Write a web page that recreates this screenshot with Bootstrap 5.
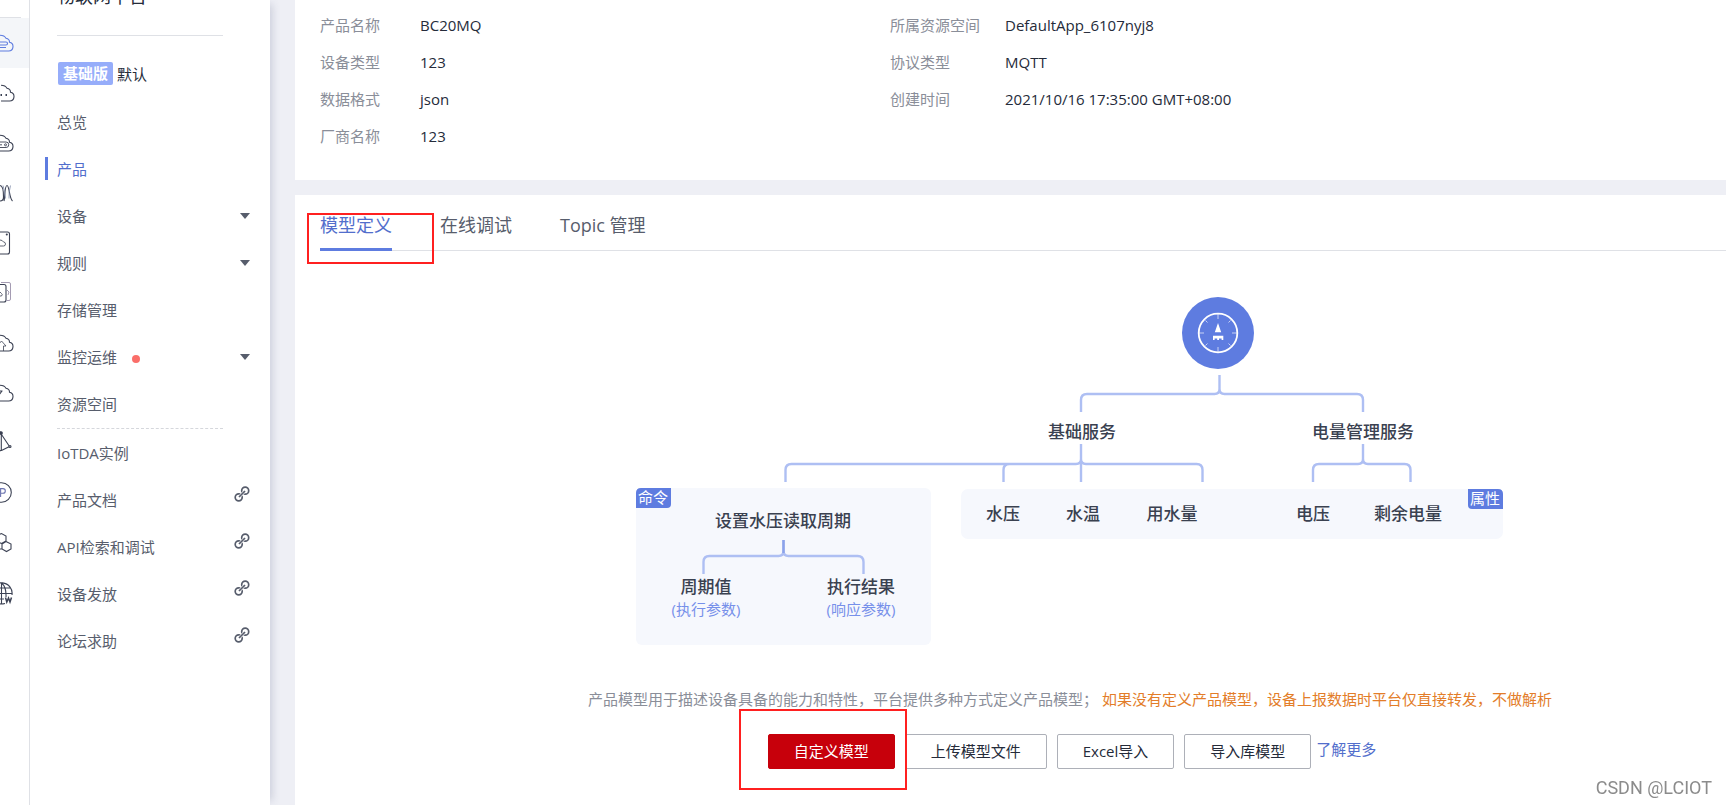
<!DOCTYPE html>
<html lang="zh-CN">
<head>
<meta charset="utf-8">
<meta name="viewport" content="width=device-width, initial-scale=1">
<title>物联网平台</title>
<link rel="stylesheet" href="https://cdn.jsdelivr.net/npm/bootstrap@5.3.0/dist/css/bootstrap.min.css">
<style>
  body { font-family: "Open Sans", "Noto Sans CJK SC", sans-serif; font-size: 15px; line-height: 24px; color: #252b3a; background: #eeeff5; }
  a { text-decoration: none; }
  .app { min-height: 100vh; overflow: hidden; }

  .rail { width: 30px; border-right: 1px solid #dfe1e6; }
  .rail-top { height: 18px; }
  .rail-top span { width: 21px; height: 1px; background: #dfe1e6; }
  .rail-item { height: 50px; color: #3c4254; }
  .rail-item.current { background: #f4f6f9; color: #5e7ce0; }
  .rail-item svg { display: block; width: 29px; height: 50px; fill: none; stroke: currentColor; stroke-width: 1.1; }

  .side { width: 240px; padding-left: 27px; box-shadow: 6px 0 8px -4px rgba(60, 70, 110, .2); z-index: 1; }
  .side-title { font-size: 18px; margin: -15px 0 0; width: 166px; height: 51px; border-bottom: 1px solid #dfe1e6; }
  .edition { margin-top: 26px; margin-bottom: 13px; height: 23px; padding-left: 1px; }
  .edition-tag { background: #96adfa; color: #fff; border-radius: 2px; padding: 0 5px; font-weight: 700; line-height: 23px; }
  .menu-link { height: 47px; padding-right: 20px; color: #575d6c; }
  .menu-link.current { color: #526ecc; border-left: 3px solid #5e7ce0; border-image: linear-gradient(transparent 12px, #5e7ce0 12px, #5e7ce0 35px, transparent 35px) 0 0 0 3; margin-left: -12px; padding-left: 9px; }
  .menu-split { width: 166px; border-top: 1px dashed #d5d7dc; margin-top: 1px; }
  .alert-dot { width: 8px; height: 8px; background: #fa6e69; margin-left: 15px; margin-top: 4px; }
  .caret { border: 5px solid transparent; border-top: 6px solid #575d6c; border-bottom: 0; }
  .ext { width: 16px; height: 16px; margin-bottom: 12px; }

  .main { padding-left: 25px; overflow: hidden; min-width: 0; }
  .panel { background: #fff; margin-right: -118px; padding: 0 24px 0 25px; }
  .panel.info { padding-top: 7px; padding-bottom: 25px; margin-bottom: 15px; }
  .info-col { flex: 0 0 38%; }
  .info-col dl { line-height: 37px; grid-template-columns: 100px 1fr; }
  .info-col.wide dl { grid-template-columns: 115px 1fr; }
  .info-col dt { font-weight: 400; color: #8a8e99; }
  .tabs { height: 56px; gap: 48px; border-bottom: 1px solid #dfe1e6; padding-top: 5px; }
  .tabs .nav-link { font-size: 18px; padding: 0; line-height: 50px; height: 51px; color: #575d6c; border-bottom: 3px solid transparent; }
  .tabs .nav-link.active { color: #526ecc; border-color: #5e7ce0; }
  .marker { position: absolute; border: 2px solid #ff2020; pointer-events: none; z-index: 2; }
  .marker-tab { inset: 13px -42px -14px -13px; }
  .marker-btn { inset: -25px -12px -21px -29px; }

  .stage { padding-top: 39px; }
  .tree { width: 868px; height: 356px; }
  .tree .name { font-size: 17px; fill: #3a4150; text-anchor: middle; font-weight: 500; }
  .tree .param { font-size: 15px; fill: #7690ea; text-anchor: middle; }
  .tree .tag-text { font-size: 15px; fill: #fff; text-anchor: middle; }
  .hint { margin: 41px 0 23px; color: #8a8e99; }
  .hint em { color: #e37d29; font-style: normal; margin-left: 4px; }
  .act { height: 35px; padding: 0 25px; font-size: 15px; line-height: 33px; border: 1px solid #adb0b8; border-radius: 2px; background: #fff; color: #252b3a; }
  .act-main { background: #c7000b; border-color: #c7000b; color: #fff; }
  .actions { gap: 10px; }
  .more { color: #526ecc; margin-left: -5px; line-height: 31px; }
  .watermark { position: fixed; right: 14px; bottom: 5px; font: 18px/24px Roboto, "Liberation Sans", sans-serif; color: #8b8b8b; }
</style>
</head>
<body>
<svg class="d-none" aria-hidden="true">
  <symbol id="cloud" viewBox="0 0 29 50"><path d="M-10 33H8.500a4.400 4.400 0 0 0 1-8.700C9.600 22 8 20.700 6 20.300 5 18.300 3 17.200 0 17.200h-3"/></symbol>
  <symbol id="chain" viewBox="0 0 16 16"><g fill="none" stroke="#575d6c" stroke-width="1.700"><circle cx="11.200" cy="4.700" r="3.500"/><circle cx="4.700" cy="11.300" r="3.500"/><path d="M6.300 9.700l3.400-3.400" stroke="#fff" stroke-width="3"/><path d="M5 11l6-6"/></g></symbol>
</svg>

<div class="app d-flex">
  <nav class="rail bg-white flex-shrink-0" aria-label="服务">
    <div class="rail-top d-flex align-items-end"><span></span></div>
    <a class="rail-item current d-block" href="#" aria-label="物联网平台"><svg viewBox="0 0 29 50"><use href="#cloud" width="29" height="50"/><path d="M-3 24H6q1.500 0 1.500 1.500T6 27H-3M6 29.500H-3"/></svg></a>
    <a class="rail-item d-block" href="#" aria-label="云服务"><svg viewBox="0 0 29 50"><use href="#cloud" x="1" width="29" height="50"/><path d="M.5 27H2M5.500 27H7" stroke-width="1.800"/></svg></a>
    <a class="rail-item d-block" href="#" aria-label="云主机"><svg viewBox="0 0 29 50"><use href="#cloud" width="29" height="50"/><path d="M-3 24H6a2.700 2.700 0 0 1 0 5.500H-3M-3 26.800H2" stroke-width=".9"/><circle cx="5.500" cy="26.800" r="1"  stroke-width=".9"/></svg></a>
    <a class="rail-item d-block" href="#" aria-label="弹性伸缩"><svg viewBox="0 0 29 50"><path d="M0 17.500C3 17.500 3.500 26 3.500 29S1.500 33 0 33M4 33C5 30 4.500 17.500 7 17.500S9 30 12.500 33"/><path d="M3 17.500q2 6 2.500 13M10.500 17.500q-2 7-1.500 13" stroke="#7e8aa8" stroke-width=".8"/></svg></a>
    <a class="rail-item d-block" href="#" aria-label="云硬盘"><svg viewBox="0 0 29 50"><path d="M-9 14H7.500q2 0 2 2V34q0 2-2 2H-9"/><path d="M-4 28H3.500a2 2 0 0 0 0-4Q2.500 22 0 22" stroke-width=".8"/><circle cx="6.800" cy="16.500" r=".5"/></svg></a>
    <a class="rail-item d-block" href="#" aria-label="专属存储"><svg viewBox="0 0 29 50"><path d="M-9 16.500H4q2 0 2 2V32q0 2-2 2H-9"/><path d="M-1 28h2.500q1.500-1.500 0-2.500L0 24" stroke-width=".8"/><path d="M1 14.500H9q1.500 0 1.500 1.500V31q0 1.500-1.500 1.500H6.500M7 22l2 2-1 3" stroke="#9b91aa" stroke-width=".9"/></svg></a>
    <a class="rail-item d-block" href="#" aria-label="云备份"><svg viewBox="0 0 29 50"><use href="#cloud" width="29" height="50"/><path d="M-2 27l3.500-4 4.500 5H3.500v5" stroke-width=".8"/></svg></a>
    <a class="rail-item d-block" href="#" aria-label="云监控"><svg viewBox="0 0 29 50"><use href="#cloud" width="29" height="50"/><path d="M-1 23H2.500M2 23L-1 27"/></svg></a>
    <a class="rail-item d-block" href="#" aria-label="网络"><svg viewBox="0 0 29 50"><path d="M1.300 15V33M1.500 16.500l8 12-8 4M-8 28l9 5"/><circle cx="1" cy="15" r="1.300" fill="currentColor"/><circle cx="10" cy="28.500" r="1" fill="#fff"/></svg></a>
    <a class="rail-item d-block" href="#" aria-label="公网 IP"><svg viewBox="0 0 29 50"><circle cx="1.500" cy="24.500" r="9.800"/><path d="M.6 29V20.600H3q2.300 0 2.300 2.300T3 25.200H.6" stroke="#6c74b0"/></svg></a>
    <a class="rail-item d-block" href="#" aria-label="区块链"><svg viewBox="0 0 29 50"><path d="M-2 17l3.500-1.500L6 18v5L1.500 25.500-2 24M6 23.500l5 2.500v5l-4.500 2.500L2 31v-5zM2 31h-4"/></svg></a>
    <a class="rail-item d-block" href="#" aria-label="域名"><svg viewBox="0 0 29 50"><path d="M5 35.500q-2 .5-3.500.5a10.600 10.600 0 1 1 10.500-9M1.500 15v21M-9 25.500H12M-7 20H10M-7 31H4M1.500 15q5 4 4.500 14"/><path d="M5.500 29.500l1.300 4.500L8.500 30l1.500 4 1.500-4.500" stroke-width="1.500"/></svg></a>
  </nav>

  <aside class="side bg-white flex-shrink-0 position-relative">
    <h1 class="side-title lh-sm fw-normal">物联网平台</h1>
    <div class="edition d-flex align-items-center gap-1"><span class="edition-tag">基础版</span><span>默认</span></div>
    <nav class="d-flex flex-column" aria-label="物联网平台">
      <a class="menu-link d-flex align-items-center" href="#">总览</a>
      <a class="menu-link current d-flex align-items-center" href="#" aria-current="page">产品</a>
      <a class="menu-link d-flex align-items-center" href="#">设备<i class="caret ms-auto"></i></a>
      <a class="menu-link d-flex align-items-center" href="#">规则<i class="caret ms-auto"></i></a>
      <a class="menu-link d-flex align-items-center" href="#">存储管理</a>
      <a class="menu-link d-flex align-items-center" href="#">监控运维<i class="alert-dot rounded-circle"></i><i class="caret ms-auto"></i></a>
      <a class="menu-link d-flex align-items-center" href="#">资源空间</a>
      <div class="menu-split"></div>
      <a class="menu-link d-flex align-items-center" href="#">IoTDA实例</a>
      <a class="menu-link d-flex align-items-center" href="#">产品文档<svg class="ext ms-auto"><use href="#chain"/></svg></a>
      <a class="menu-link d-flex align-items-center" href="#">API检索和调试<svg class="ext ms-auto"><use href="#chain"/></svg></a>
      <a class="menu-link d-flex align-items-center" href="#">设备发放<svg class="ext ms-auto"><use href="#chain"/></svg></a>
      <a class="menu-link d-flex align-items-center" href="#">论坛求助<svg class="ext ms-auto"><use href="#chain"/></svg></a>
    </nav>
  </aside>

  <main class="main flex-grow-1 d-flex flex-column">
    <section class="panel info d-flex">
      <div class="info-col">
        <dl class="d-grid mb-0">
          <dt>产品名称</dt><dd class="mb-0">BC20MQ</dd>
          <dt>设备类型</dt><dd class="mb-0">123</dd>
          <dt>数据格式</dt><dd class="mb-0">json</dd>
          <dt>厂商名称</dt><dd class="mb-0">123</dd>
        </dl>
      </div>
      <div class="info-col wide">
        <dl class="d-grid mb-0">
          <dt>所属资源空间</dt><dd class="mb-0">DefaultApp_6107nyj8</dd>
          <dt>协议类型</dt><dd class="mb-0">MQTT</dd>
          <dt>创建时间</dt><dd class="mb-0">2021/10/16 17:35:00 GMT+08:00</dd>
        </dl>
      </div>
    </section>

    <section class="panel flex-grow-1">
      <div class="nav tabs flex-nowrap">
        <div class="position-relative"><a class="nav-link active" href="#">模型定义</a><span class="marker marker-tab"></span></div>
        <a class="nav-link" href="#">在线调试</a>
        <a class="nav-link" href="#">Topic 管理</a>
      </div>

      <div class="stage d-flex flex-column align-items-center">
        <svg class="tree" viewBox="0 0 868 356" role="img" aria-label="产品模型示意图">
          <rect x="0" y="198" width="295" height="157" rx="6" fill="#f6f8fd"/>
          <rect x="325" y="199" width="542" height="50" rx="7" fill="#f6f8fd"/>
          <path d="M0 218V203q0-5 5-5H35v16q0 4-4 4z" fill="#5e7ce0"/>
          <path d="M832 199h30q5 0 5 5v15H836q-4 0-4-4z" fill="#5e7ce0"/>
          <circle cx="582" cy="43" r="36" fill="#5e7ce0"/>
          <g fill="none" stroke="#fff">
            <circle cx="582" cy="43" r="19.300" stroke-width="1.800"/>
            <path d="M582 24v5M582 57v5M563 43h5M596 43h5M569.500 30.500l2 2M594.500 30.500l-2 2M569.500 55.500l2-2M594.500 55.500l-2-2" stroke-opacity=".65"/>
          </g>
          <path d="M582 33l3.200 9.300h-6.400zM577 45.700h10.300V50H585.600V48.600H583V50H581.200V48.600H578.600V50H577z" fill="#fff"/>
          <g fill="none" stroke="#aebff3" stroke-width="2.400">
            <path d="M583.500 85V99q0 5-5 5H451q-6 0-6 6v12M583.500 99q0 5 5 5H721q6 0 6 6v12"/>
            <path d="M445 154v38M445 169q0 5-5 5H155.500q-6 0-6 6v12M373.500 174q-6 0-6 6v12M445 169q0 5 5 5H560.500q6 0 6 6v12"/>
            <path d="M727 154v15q0 5-5 5H683q-6 0-6 6v12M727 169q0 5 5 5h36.500q6 0 6 6v12"/>
            <path d="M147.500 250v11q0 5-5 5H73.500q-6 0-6 6v12M147.500 261q0 5 5 5h69q6 0 6 6v12"/>
          </g>
          <path d="M147.500 250v13" stroke="#8ba2ea" stroke-width="2.400"/>
          <g class="name">
            <text x="446" y="148">基础服务</text>
            <text x="727" y="148">电量管理服务</text>
            <text x="147" y="237">设置水压读取周期</text>
            <text x="367" y="230">水压</text>
            <text x="447" y="230">水温</text>
            <text x="536" y="230">用水量</text>
            <text x="677" y="230">电压</text>
            <text x="772" y="230">剩余电量</text>
            <text x="70" y="303">周期值</text>
            <text x="225" y="303">执行结果</text>
          </g>
          <text class="param" x="70" y="325">(执行参数)</text>
          <text class="param" x="225" y="325">(响应参数)</text>
          <text class="tag-text" x="17" y="213">命令</text>
          <text class="tag-text" x="849" y="214">属性</text>
        </svg>

        <p class="hint text-nowrap">产品模型用于描述设备具备的能力和特性，平台提供多种方式定义产品模型；<em>如果没有定义产品模型，设备上报数据时平台仅直接转发，不做解析</em></p>

        <div class="actions d-flex text-nowrap ps-1">
          <div class="position-relative"><button class="act act-main" type="button">自定义模型</button><span class="marker marker-btn"></span></div>
          <button class="act" type="button">上传模型文件</button>
          <button class="act" type="button">Excel导入</button>
          <button class="act" type="button">导入库模型</button>
          <a class="more" href="#">了解更多</a>
        </div>
      </div>
    </section>
  </main>
</div>
<div class="watermark">CSDN @LCIOT</div>
<script src="https://cdn.jsdelivr.net/npm/bootstrap@5.3.0/dist/js/bootstrap.bundle.min.js"></script>
</body>
</html>
